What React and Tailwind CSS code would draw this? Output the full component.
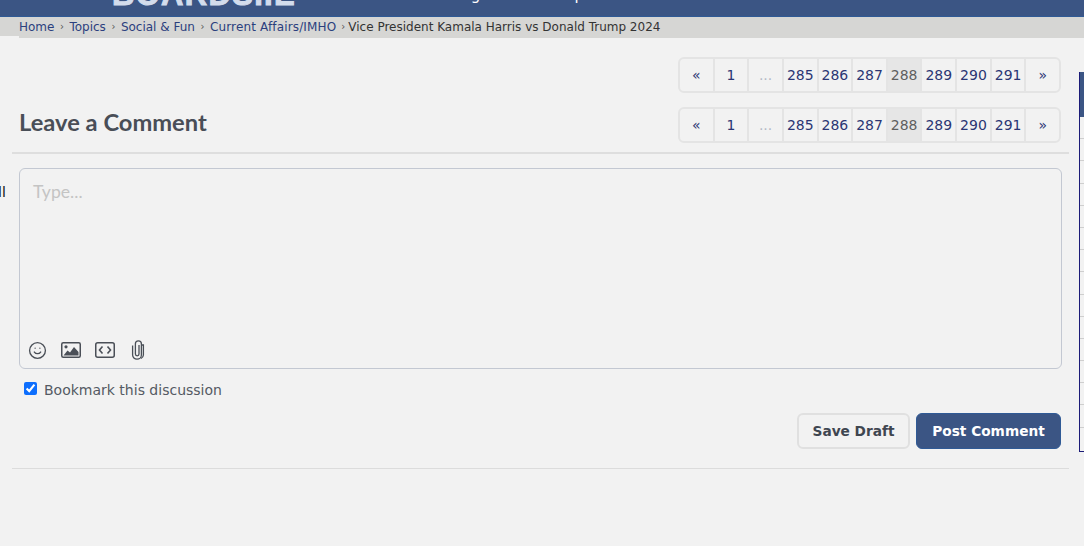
import { Smile } from 'lucide-react';

const pages = ['«', '1', '...', '285', '286', '287', '288', '289', '290', '291', '»'];
const rows = Array.from({ length: 15 });

function Pagination() {
  return (
    <div className="flex h-[36px] w-[383px] rounded-md border-2 border-[#e4e4e4] overflow-hidden text-[14px] text-[#2b3674]">
      {pages.map((p, i) => (
        <div
          key={i}
          className={`flex-1 flex items-center justify-center border-l-2 border-[#e4e4e4] first:border-l-0 ${
            p === '288' ? 'bg-[#e6e6e6] text-[#5f5f5f]' : p === '...' ? 'text-[#b3b9c6]' : ''
          }`}
        >
          {p}
        </div>
      ))}
    </div>
  );
}

function ImageIcon() {
  return (
    <svg width="20" height="16" viewBox="0 0 20 16" className="text-[#4a4f57]">
      <rect x="0.75" y="0.75" width="18.5" height="14.5" rx="1.5" fill="none" stroke="currentColor" strokeWidth="1.5" />
      <circle cx="5" cy="4.8" r="1.6" fill="currentColor" />
      <path d="M2.5 13.5 L6.5 8.5 L9 10.5 L13 5 L17.5 10 V13.5 Z" fill="currentColor" />
    </svg>
  );
}

function CodeIcon() {
  return (
    <svg width="20" height="16" viewBox="0 0 20 16" className="text-[#4a4f57]" fill="none" stroke="currentColor">
      <rect x="0.75" y="0.75" width="18.5" height="14.5" rx="2" strokeWidth="1.5" />
      <path d="M7.5 4.5 L4.5 8 L7.5 11.5 M12.5 4.5 L15.5 8 L12.5 11.5" strokeWidth="1.6" />
    </svg>
  );
}

function ClipIcon() {
  return (
    <svg width="16" height="20" viewBox="0 0 16 20" className="text-[#4a4f57]" fill="none" stroke="currentColor" strokeWidth="1.3">
      <path d="M9 5 V14 A1.8 1.8 0 0 1 5.4 14 V3.8 A3 3 0 0 1 11.4 3.8 V15 A4.4 4.2 0 0 1 2.6 15 V5.5" />
      <path d="M11.4 5 H13.4 V15 A5.5 4.5 0 0 1 11 18.5" strokeWidth="1.3" />
    </svg>
  );
}

export default function App() {
  return (
    <div className="h-[546px] overflow-hidden bg-[#f2f2f2] font-['DejaVu_Sans',sans-serif]">
      {/* Header is scrolled almost out of view */}
      <header className="h-[17px] bg-[#3b5584] border-b border-[#2f5a96] overflow-hidden flex">
        <div className="ml-[112px] -mt-[19px] w-[184px] h-[28px] shrink-0 text-[31px] leading-[28px] font-black tracking-[1.3px] text-[#d3dcec] [-webkit-text-stroke:1px_#d3dcec] font-['Liberation_Sans',sans-serif] whitespace-nowrap">
          BOARDS.IE
        </div>
        <div className="ml-[140px] -mt-[14px] text-[15px] leading-[18px] text-white whitespace-nowrap">Categories</div>
        <div className="ml-[33px] -mt-[14px] text-[15px] leading-[18px] text-white whitespace-nowrap">Help</div>
      </header>

      <div className="flex">
        <div className="w-[19px] h-[19px] bg-[#d6d6d4]" />
        <nav className="flex-1 h-[21px] bg-[#d6d6d4] pt-[1px] flex items-start text-[12px] leading-[18px] text-[#2b3f7e] whitespace-nowrap">
          <span>Home</span>
          <span className="mx-[5.5px] text-[#555] text-[10px]">›</span>
          <span>Topics</span>
          <span className="mx-[5.5px] text-[#555] text-[10px]">›</span>
          <span>Social &amp; Fun</span>
          <span className="mx-[5.5px] text-[#555] text-[10px]">›</span>
          <span className="tracking-[0.15px]">Current Affairs/IMHO</span>
          <span className="ml-[5px] mr-[3px] text-[#555] text-[10px]">›</span>
          <span className="text-[#333]">Vice President Kamala Harris vs Donald Trump 2024</span>
        </nav>
      </div>

      <div className="flex">
        <div className="w-[12px] shrink-0 overflow-hidden">
          <div className="mt-[145px] -ml-[2px] text-[14px] leading-[18px] text-[#111]">ll</div>
        </div>

        <main className="w-[1057px] shrink-0">
          <div className="flex justify-end pt-[19px] pr-[8px]">
            <Pagination />
          </div>
          <div className="flex items-start justify-between pt-[14px] pb-[9px] pl-[7px] pr-[8px] border-b-2 border-[#dedede]">
            <h2 className="text-[23.7px] leading-[30px] font-bold text-[#494e57] font-['Lato',sans-serif]">Leave a Comment</h2>
            <Pagination />
          </div>

          <div className="mt-[14px] ml-[7px] mr-[7px] h-[201px] rounded-md border border-[#c3c8d2] flex flex-col justify-between px-[8px] pb-[6px]">
            <div className="pl-[5px] pt-[12px] text-[17.6px] leading-[22px] text-[#c4c4c4] font-['Lato',sans-serif]">Type...</div>
            <div className="flex items-center h-[24px]">
              <Smile size={19} strokeWidth={1.7} className="text-[#4a4f57]" />
              <div className="ml-[14px]"><ImageIcon /></div>
              <div className="ml-[14px]"><CodeIcon /></div>
              <div className="ml-[15px]"><ClipIcon /></div>
            </div>
          </div>

          <label className="flex items-center mt-[12px] ml-[12px] h-[18px] text-[14px] text-[#555a63]">
            <input type="checkbox" defaultChecked className="w-[13px] h-[13px] m-0 mb-[3px] accent-[#0d6efd]" />
            <span className="ml-[7px]">Bookmark this discussion</span>
          </label>

          <div className="flex justify-end gap-[6px] mt-[14px] pr-[8px]">
            <button className="w-[113px] h-[36px] rounded-md border-2 border-[#e0e0e0] text-[13.7px] font-bold text-[#3f4650]">Save Draft</button>
            <button className="w-[145px] h-[36px] rounded-md bg-[#3b5584] border border-[#2f5a96] text-[13.7px] font-bold text-white">Post Comment</button>
          </div>

          <div className="mt-[19px] border-b border-[#dcdcdc]" />
        </main>

        {/* Sidebar table cut off by the window */}
        <aside className="ml-[10px] mt-[34px] flex-1 h-[380px] border-l border-b border-[#1c1c78]">
          <div className="h-[45px] bg-[#3b5584]" />
          {rows.map((_, i) => (
            <div key={i} className="h-[22.2px] border-b border-[#cfcfcf] last:border-b-0" />
          ))}
        </aside>
      </div>
    </div>
  );
}
